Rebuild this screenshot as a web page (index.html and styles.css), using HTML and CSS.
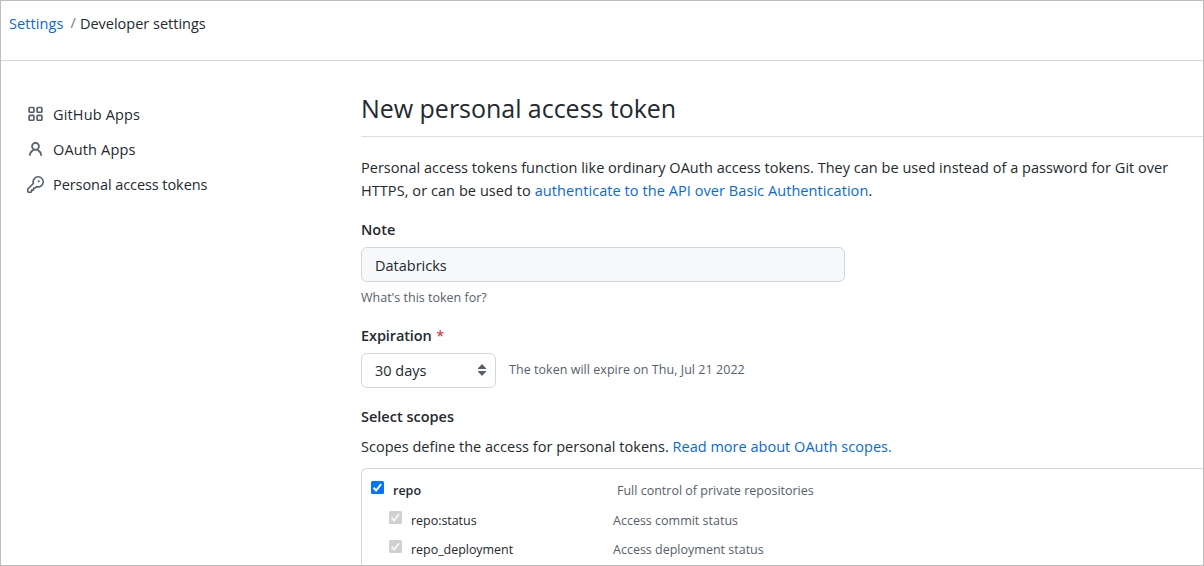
FILE: index.html
```html
<!DOCTYPE html>
<html lang="en">
<head>
<meta charset="utf-8">
<title>New personal access token</title>
<link rel="stylesheet" href="styles.css">
</head>
<body>
<div class="page">
  <header class="topbar">
    <a class="link crumb-link">Settings</a><span class="slash">/</span><span class="crumb">Developer settings</span>
  </header>
  <div class="layout">
    <nav class="sidebar">
      <a class="nav-item"><svg class="icon" viewBox="0 0 16 16"><g fill="none" stroke="currentColor" stroke-width="1.6"><rect x="2" y="1.4" width="4.5" height="4.5" rx=".8"/><rect x="9.5" y="1.4" width="4.5" height="4.5" rx=".8"/><rect x="2" y="8.9" width="4.5" height="4.5" rx=".8"/><rect x="9.5" y="8.9" width="4.5" height="4.5" rx=".8"/></g></svg><span class="nav-text wide">GitHub Apps</span></a>
      <a class="nav-item"><svg class="icon" viewBox="0 0 16 16"><path fill="currentColor" stroke="currentColor" stroke-width=".2" fill-rule="evenodd" d="M10.5 5a2.5 2.5 0 11-5 0 2.5 2.5 0 015 0zm.061 3.073a4 4 0 10-5.123 0 6.004 6.004 0 00-3.431 5.142.75.75 0 001.498.07 4.5 4.5 0 018.99 0 .75.75 0 101.498-.07 6.005 6.005 0 00-3.432-5.142z"/></svg><span class="nav-text wide">OAuth Apps</span></a>
      <a class="nav-item"><svg class="icon" viewBox="0 0 16 16"><path fill="currentColor" fill-rule="evenodd" d="M6.5 5.5a4 4 0 112.731 3.795.75.75 0 00-.768.18L7.44 10.5H6.25a.75.75 0 00-.75.75v1.19l-.06.06H4.25a.75.75 0 00-.75.75v1.19l-.06.06H1.75a.25.25 0 01-.25-.25v-1.69l5.024-5.023a.75.75 0 00.181-.768A3.995 3.995 0 016.5 5.5zm4-5.5a5.5 5.5 0 00-5.348 6.788L.22 11.72a.75.75 0 00-.22.53v2C0 15.216.784 16 1.75 16h2a.75.75 0 00.53-.22l.5-.5a.75.75 0 00.22-.53V14h.75a.75.75 0 00.53-.22l.5-.5a.75.75 0 00.22-.53V12h.75a.75.75 0 00.53-.22l.932-.932A5.5 5.5 0 1010.5 0zm.5 6a1 1 0 100-2 1 1 0 000 2z"/></svg><span class="nav-text narrow">Personal access tokens</span></a>
    </nav>
    <main class="content">
      <h1 class="title">New personal access token</h1>
      <p class="intro"><span class="intro-first">Personal access tokens function like ordinary OAuth access tokens. They can be used instead of a password for Git over</span><br><span class="intro-second">HTTPS, or can be used to <a class="link">authenticate to the API over Basic Authentication</a>.</span></p>
      <div class="label note-label">Note</div>
      <div class="input">Databricks</div>
      <div class="hint">What's this token for?</div>
      <div class="label expiration-label">Expiration <span class="required">*</span></div>
      <div class="expiration">
        <div class="select"><span>30 days</span><svg class="arrows" viewBox="0 0 10 12"><path fill="currentColor" d="M5 0L9 4.2V5H1v-.8zM5 12L1 7.8V7h8v.8z"/></svg></div>
        <span class="small">The token will expire on Thu, Jul 21 2022</span>
      </div>
      <div class="label scopes-label">Select scopes</div>
      <p class="scopes-text">Scopes define the access for personal tokens. <a class="link">Read more about OAuth scopes.</a></p>
      <div class="scopes">
        <div class="scope">
          <svg class="check" viewBox="0 0 13 13"><rect width="13" height="13" rx="1.5" fill="#0075ff"/><path d="M2.6 6.8l2.5 2.7 5-6.3" fill="none" stroke="#fff" stroke-width="2"/></svg>
          <span class="scope-name strong">repo</span><span class="scope-desc parent-desc">Full control of private repositories</span>
        </div>
        <div class="scope child">
          <svg class="check" viewBox="0 0 13 13"><rect width="13" height="13" rx="1.5" fill="#d0d0d0"/><path d="M2.6 6.8l2.5 2.7 5-6.3" fill="none" stroke="#f4f4f4" stroke-width="2"/></svg>
          <span class="scope-name">repo:status</span><span class="scope-desc commit-desc">Access commit status</span>
        </div>
        <div class="scope child">
          <svg class="check" viewBox="0 0 13 13"><rect width="13" height="13" rx="1.5" fill="#d0d0d0"/><path d="M2.6 6.8l2.5 2.7 5-6.3" fill="none" stroke="#f4f4f4" stroke-width="2"/></svg>
          <span class="scope-name">repo_deployment</span><span class="scope-desc">Access deployment status</span>
        </div>
      </div>
    </main>
  </div>
</div>
</body>
</html>
```
FILE: styles.css
```css
* { box-sizing: border-box; }
body { margin: 0; background: #fff; color: #24292f; font: 14.5px/23px "Open Sans", "Noto Sans", sans-serif; }
h1, p { margin: 0; }
.page { width: 1204px; height: 566px; overflow: hidden; border: 1px solid #bdbdbd; white-space: nowrap; }
.link { color: #0969da; }
.topbar { height: 60px; padding: 11px 8px 0; border-bottom: 1px solid #d0d7de; display: flex; }
.crumb-link { letter-spacing: .1px; }
.slash { color: #6e7781; margin: -1px 4px 0 7px; }
.layout { display: flex; }
.sidebar { width: 360px; padding: 36px 0 0 26px; }
.nav-item { display: flex; align-items: center; height: 35px; gap: 9px; }
.wide { letter-spacing: .15px; }
.narrow { letter-spacing: -.07px; }
.icon { width: 17px; height: 17px; color: #57606a; flex: none; }
.content { width: 842px; }
.title { height: 76px; padding-top: 28px; font-size: 25px; line-height: 39px; font-weight: 400; letter-spacing: -.03px; border-bottom: 1px solid #d8dee4; }
.intro { margin-top: 19px; }
.intro-first { letter-spacing: .02px; }
.intro-second { letter-spacing: .07px; }
.label { font-weight: 600; }
.note-label { margin-top: 16px; }
.input { width: 484px; height: 35px; margin-top: 6px; padding: 6px 13px; border: 1px solid #d0d7de; border-radius: 6px; background: #f6f8fa; }
.hint, .small, .scope { font-size: 12.5px; }
.hint { margin-top: 4px; color: #57606a; }
.expiration-label { margin-top: 15px; letter-spacing: -.1px; }
.required { color: #cf222e; font-weight: 400; margin-left: 1px; }
.expiration { display: flex; align-items: center; gap: 13px; margin-top: 6px; }
.select { width: 135px; height: 35px; padding: 0 8px 0 13px; display: flex; align-items: center; justify-content: space-between; border: 1px solid #d0d7de; border-radius: 6px; }
.arrows { width: 10px; height: 12px; margin-top: -2px; color: #57606a; }
.small { color: #57606a; letter-spacing: .04px; padding-bottom: 2px; }
.scopes-label { margin-top: 17px; }
.scopes-text { margin-top: 7px; letter-spacing: .02px; }
.scopes { height: 120px; margin-top: 10px; padding: 7px 0 0 9px; border: 1px solid #d0d7de; border-right: 0; border-radius: 6px 0 0 0; }
.scope { display: flex; height: 30px; line-height: 29px; }
.scope.child { height: 29px; padding-left: 18px; }
.check { width: 13px; height: 13px; margin-top: 5px; flex: none; }
.scope-name { width: 224px; margin-left: 9px; }
.child .scope-name { width: 202px; letter-spacing: -.04px; }
.strong { font-weight: 600; }
.scope-desc { color: #57606a; }
```
